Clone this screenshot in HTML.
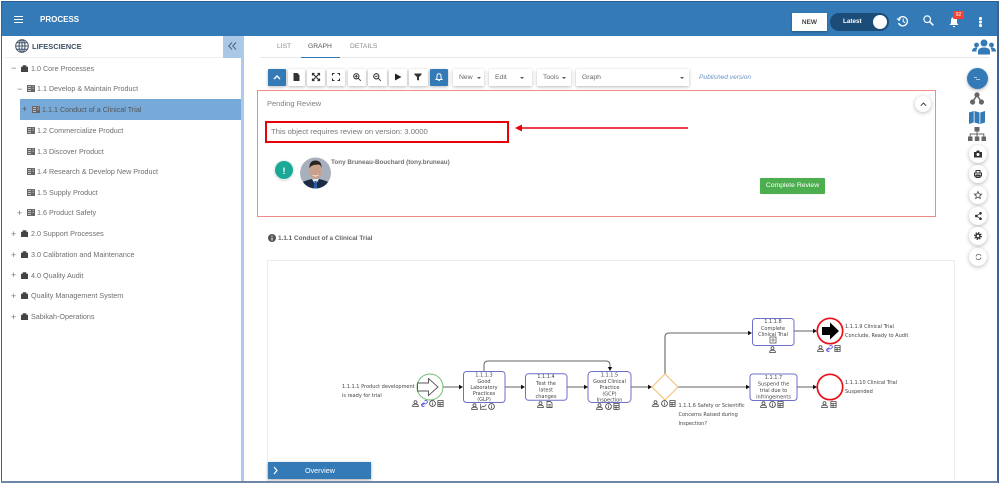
<!DOCTYPE html>
<html><head><meta charset="utf-8">
<style>
html,body{margin:0;padding:0;background:#fff}
#p{position:relative;width:1000px;height:484px;overflow:hidden;background:#fff;font-family:"Liberation Sans",sans-serif;color:#757575}
#p div,#p span.a{position:absolute;white-space:nowrap}
.t{font-size:7.2px;line-height:10px;color:#6f6f6f}
.ex{font-size:9px;line-height:10px;color:#777}
.b{background:#fff;box-shadow:0 1px 3px rgba(0,0,0,.28);border-radius:1px;height:17px;top:69px}
.bb{background:#337ab7}
.c{background:#fff;border-radius:50%;box-shadow:0 1px 4px rgba(0,0,0,.28);width:18px;height:18px;left:969px}
svg{position:absolute;overflow:visible}
</style></head><body><div id="p">
<!-- header -->
<div style="left:2px;top:2px;width:995px;height:34px;background:#337ab7"></div>
<div style="left:14px;top:16px;width:9px;height:1px;background:#fff;box-shadow:0 3px 0 #fff,0 6px 0 #fff"></div>
<div style="left:40px;top:15px;font-size:8px;line-height:10px;font-weight:bold;color:#fff">PROCESS</div>
<div style="left:792px;top:13px;width:35px;height:18px;background:#fff;box-shadow:0 1px 2px rgba(0,0,0,.3)"></div>
<div style="left:792px;top:18px;width:35px;text-align:center;font-size:6.5px;line-height:10px;font-weight:bold;color:#444">NEW</div>
<div style="left:830px;top:13px;width:59px;height:17.5px;background:#1c4c78;border-radius:9px"></div>
<div style="left:843px;top:17px;font-size:6.3px;line-height:10px;font-weight:bold;color:#fff">Latest</div>
<div style="left:873px;top:14.5px;width:14px;height:14px;background:#fff;border-radius:50%"></div>
<svg style="left:897px;top:15px" width="12" height="12" viewBox="0 0 12 12" fill="none" stroke="#fff" stroke-width="1.3"><path d="M1.5 4.5A4.6 4.6 0 1 1 1.5 8"/><path d="M0 3.5l2 2 1.5-2" stroke-width="1"/><path d="M6.2 3.5v3l2 1.2" stroke-width="1"/></svg>
<svg style="left:923px;top:15px" width="11" height="11" viewBox="0 0 11 11" fill="none" stroke="#fff" stroke-width="1.2"><circle cx="4.2" cy="4.2" r="3.3"/><path d="M6.8 6.8L10.3 10.3" stroke-width="1.5"/></svg>
<svg style="left:949px;top:17px" width="10" height="11" viewBox="0 0 10 11" fill="#fff"><path d="M5 0C3 0 2 1.5 2 3.5V6L.5 8h9L8 6V3.5C8 1.5 7 0 5 0zM3.8 9a1.2 1.2 0 0 0 2.4 0z"/></svg>
<div style="left:953px;top:11px;width:11px;height:8px;background:#f44336;border-radius:1px"></div>
<div style="left:953px;top:11px;width:11px;text-align:center;font-size:5px;line-height:8px;color:#fff">92</div>
<div style="left:979px;top:17px;width:2.5px;height:2.5px;background:#fff;border-radius:50%;box-shadow:0 3.5px 0 #fff,0 7px 0 #fff"></div>
<!-- sidebar -->
<div style="left:241px;top:36px;width:3px;height:445px;background:#a9cbec"></div>
<div style="left:223px;top:36px;width:18px;height:22px;background:#a9c8e6"></div>
<svg style="left:228px;top:42px" width="9" height="8" viewBox="0 0 9 8" fill="none" stroke="#4d6a86" stroke-width="1.1"><path d="M4 .5L.8 4 4 7.5M8 .5L4.8 4 8 7.5"/></svg>
<div style="left:4px;top:57px;width:219px;height:1px;background:#f0f0f0"></div>
<svg style="left:15px;top:39px" width="14" height="14" viewBox="0 0 14 14" fill="none" stroke="#3f5268" stroke-width="1"><circle cx="7" cy="7" r="6.3"/><ellipse cx="7" cy="7" rx="3" ry="6.3"/><path d="M7 .7v12.6M.7 7h12.6M1.6 3.8h10.8M1.6 10.2h10.8"/></svg>
<div style="left:32px;top:42px;font-size:7.5px;line-height:10px;font-weight:bold;color:#3d5166">LIFESCIENCE</div>
<div style="left:20px;top:99px;width:221px;height:21px;background:#77a9d9"></div>

<svg width="0" height="0" style="left:0;top:0"><defs>
<symbol id="br" viewBox="0 0 7 7"><path d="M0 2h7v5H0zM2 2V.5h3V2" fill="#444" stroke="#444" stroke-width=".6"/></symbol>
<symbol id="pr" viewBox="0 0 8 7"><path d="M0 0h8v7H0z" fill="#666"/><path d="M1 1.5h3M1 3.5h3M1 5.5h3M5.5 1.2h1.500M5.5 3.2h1.500" stroke="#ddd" stroke-width=".7"/></symbol>
<symbol id="u" viewBox="0 0 8 8"><g fill="none" stroke="#555" stroke-width="1"><circle cx="4" cy="2.5" r="1.7"/><path d="M.8 7.5V6.5C.8 5.2 2 4.8 4 4.8s3.2.4 3.2 1.700v1z"/></g></symbol>
<symbol id="i" viewBox="0 0 8 8"><circle cx="4" cy="4" r="3.3" fill="none" stroke="#444" stroke-width="1"/><path d="M4 2v1M4 3.5v2.500" stroke="#444" stroke-width=".9"/></symbol>
<symbol id="d" viewBox="0 0 8 8"><path d="M1 .6h6v6.800H1zM1 3h6M1 5h6M3.5 3v4.400" fill="none" stroke="#444" stroke-width=".9"/></symbol>
<symbol id="l" viewBox="0 0 8 8"><path d="M1 6.5L3.5 4M4 1.5l1-1c1-.6 2.8 1 2.3 2.200l-1.5 1.500c-.8.6-1.6.2-2-.4M4 6.5l-1 1C2 8 .2 6.4.7 5.200l1.500-1.500c.8-.6 1.600-.2 2 .4" fill="none" stroke="#5b5be0" stroke-width="1"/></symbol>
<symbol id="g" viewBox="0 0 9 8"><path d="M.5 .5v7h8M1.5 5.5l2-2 1.500 1 3-3" fill="none" stroke="#444" stroke-width=".9"/></symbol>
<symbol id="f" viewBox="0 0 7 8"><path d="M.6.5h3.800l2 2v5H.6zM2 4h3M2 5.8h3" fill="none" stroke="#444" stroke-width=".9"/></symbol>
</defs></svg>

<div class="ex" style="left:11px;top:63px">−</div><svg style="left:21px;top:64.5px" width="7" height="7"><use href="#br"/></svg><div class="t" style="left:31px;top:64px">1.0 Core Processes</div>
<div class="ex" style="left:17px;top:84px">−</div><svg style="left:27px;top:85px" width="8" height="7"><use href="#pr"/></svg><div class="t" style="left:37px;top:84px">1.1 Develop &amp; Maintain Product</div>
<div class="ex" style="left:22px;top:104px;color:#555">+</div><svg style="left:32px;top:106px" width="8" height="7"><use href="#pr"/></svg><div class="t" style="left:42px;top:105px;color:#555">1.1.1 Conduct of a Clinical Trial</div>
<svg style="left:27px;top:127px" width="8" height="7"><use href="#pr"/></svg><div class="t" style="left:37px;top:126px">1.2 Commercialize Product</div>
<svg style="left:27px;top:148px" width="8" height="7"><use href="#pr"/></svg><div class="t" style="left:37px;top:147px">1.3 Discover Product</div>
<svg style="left:27px;top:168px" width="8" height="7"><use href="#pr"/></svg><div class="t" style="left:37px;top:167px">1.4 Research &amp; Develop New Product</div>
<svg style="left:27px;top:189px" width="8" height="7"><use href="#pr"/></svg><div class="t" style="left:37px;top:188px">1.5 Supply Product</div>
<div class="ex" style="left:17px;top:208px">+</div><svg style="left:27px;top:209px" width="8" height="7"><use href="#pr"/></svg><div class="t" style="left:37px;top:208px">1.6 Product Safety</div>
<div class="ex" style="left:11px;top:229px">+</div><svg style="left:21px;top:230px" width="7" height="7"><use href="#br"/></svg><div class="t" style="left:31px;top:229px">2.0 Support Processes</div>
<div class="ex" style="left:11px;top:250px">+</div><svg style="left:21px;top:251px" width="7" height="7"><use href="#br"/></svg><div class="t" style="left:31px;top:250px">3.0 Calibration and Maintenance</div>
<div class="ex" style="left:11px;top:270px">+</div><svg style="left:21px;top:272px" width="7" height="7"><use href="#br"/></svg><div class="t" style="left:31px;top:271px">4.0 Quality Audit</div>
<div class="ex" style="left:11px;top:291px">+</div><svg style="left:21px;top:292px" width="7" height="7"><use href="#br"/></svg><div class="t" style="left:31px;top:291px">Quality Management System</div>
<div class="ex" style="left:11px;top:312px">+</div><svg style="left:21px;top:313px" width="7" height="7"><use href="#br"/></svg><div class="t" style="left:31px;top:312px">Sabikah-Operations</div>

<!-- tabs -->
<div style="left:260px;top:57px;width:730px;height:1px;background:#e8e8e8"></div>
<div style="left:277px;top:42px;font-size:6.7px;line-height:10px;color:#8a8a8a">LIST</div>
<div style="left:308px;top:42px;font-size:6.7px;line-height:10px;color:#555">GRAPH</div>
<div style="left:350px;top:42px;font-size:6.7px;line-height:10px;color:#8a8a8a">DETAILS</div>
<div style="left:301px;top:57px;width:39px;height:1px;background:#337ab7"></div>
<!-- toolbar -->
<div class="b bb" style="left:268px;width:18px"></div>
<svg style="left:273px;top:75px" width="8" height="5" fill="none" stroke="#fff" stroke-width="1.4"><path d="M1 4l3-3 3 3"/></svg>
<div class="b" style="left:288px;width:17px"></div>
<svg style="left:293px;top:73px" width="7" height="8" fill="#333"><path d="M.5 0h4l2 2.200V8H.5z"/></svg>
<div class="b" style="left:307px;width:18px"></div>
<svg style="left:312px;top:73px" width="8" height="8" fill="none" stroke="#333" stroke-width="1.2"><path d="M1 1l6 6M7 1L1 7M.5 2.5V.5h2M5.5.5h2v2M.5 5.5v2h2M5.5 7.5h2v-2"/></svg>
<div class="b" style="left:327px;width:18px"></div>
<svg style="left:332px;top:73px" width="8" height="8" fill="none" stroke="#333" stroke-width="1.1"><path d="M.5 2.5V.5h2M5.5.5h2v2M.5 5.5v2h2M5.5 7.5h2v-2"/></svg>
<div class="b" style="left:348px;width:18px"></div>
<svg style="left:353px;top:73px" width="8" height="8" fill="none" stroke="#333" stroke-width="1.1"><circle cx="3.3" cy="3.3" r="2.6"/><path d="M5.3 5.3L7.8 7.800M2 3.3h2.600M3.3 2v2.600" stroke-width="1"/></svg>
<div class="b" style="left:368px;width:19px"></div>
<svg style="left:373px;top:73px" width="8" height="8" fill="none" stroke="#333" stroke-width="1.1"><circle cx="3.3" cy="3.3" r="2.6"/><path d="M5.3 5.3L7.8 7.800M2 3.3h2.600" stroke-width="1"/></svg>
<div class="b" style="left:389px;width:18px"></div>
<svg style="left:394px;top:73px" width="8" height="8" fill="#222"><path d="M1 .5l6.500 3.500L1 7.500z"/></svg>
<div class="b" style="left:409px;width:19px"></div>
<svg style="left:414px;top:73px" width="8" height="8" fill="#333"><path d="M.5.5h7v1.200L5 4v3.500L3 7V4L.5 1.700z"/></svg>
<div class="b bb" style="left:430px;width:18px"></div>
<svg style="left:435px;top:73px" width="8" height="9" fill="none" stroke="#fff" stroke-width="1"><path d="M4 .8C2.5.8 2 2 2 3.200V5L1 6.500h6L6 5V3.200C6 2 5.5.8 4 .8zM3.2 7.500h1.600"/></svg>
<div class="b" style="left:453px;width:31px"></div>
<div style="left:459px;top:73px;font-size:6.8px;line-height:10px;color:#666">New</div>
<div style="left:477px;top:77px;width:0;height:0;border:2px solid transparent;border-top-color:#555;border-bottom:0"></div>
<div class="b" style="left:489px;width:43px"></div>
<div style="left:495px;top:73px;font-size:6.8px;line-height:10px;color:#666">Edit</div>
<div style="left:520px;top:77px;width:0;height:0;border:2px solid transparent;border-top-color:#555;border-bottom:0"></div>
<div class="b" style="left:537px;width:34px"></div>
<div style="left:543px;top:73px;font-size:6.8px;line-height:10px;color:#666">Tools</div>
<div style="left:562px;top:77px;width:0;height:0;border:2px solid transparent;border-top-color:#555;border-bottom:0"></div>
<div class="b" style="left:576px;width:113px"></div>
<div style="left:582px;top:73px;font-size:6.8px;line-height:10px;color:#666">Graph</div>
<div style="left:680px;top:77px;width:0;height:0;border:2px solid transparent;border-top-color:#555;border-bottom:0"></div>
<div style="left:699px;top:73px;font-size:6.6px;line-height:10px;font-style:italic;color:#6b93c4">Published version</div>
<!-- pending -->
<div style="left:257px;top:90px;width:679px;height:127px;box-sizing:border-box;border:1px solid #f28a8a"></div>
<div style="left:267px;top:99px;font-size:7.5px;line-height:10px;color:#808080">Pending Review</div>
<div style="left:265px;top:121px;width:244px;height:22px;box-sizing:border-box;border:2px solid #e8000b"></div>
<div style="left:271px;top:127px;font-size:7.7px;line-height:10px;color:#777">This object requires review on version: 3.0000</div>
<svg style="left:514px;top:124px" width="176" height="8"><path d="M6 4h168" stroke="#e8000b" stroke-width="1.5"/><path d="M1 4l7-3.500v7z" fill="#e8000b"/></svg>
<div class="c" style="left:915px;top:96px;width:16px;height:16px"></div>
<svg style="left:920px;top:102px" width="7" height="5" fill="none" stroke="#444" stroke-width="1"><path d="M.8 3.8L3.5 1l2.700 2.800"/></svg>
<div style="left:275px;top:161px;width:18px;height:18px;background:#1aa997;border-radius:50%;box-shadow:0 0 0 1px #eee,0 1px 3px rgba(0,0,0,.25)"></div>
<div style="left:275px;top:166px;width:18px;text-align:center;color:#fff;font-size:9px;line-height:10px;font-weight:bold">!</div>
<svg style="left:300px;top:157px" width="31" height="32" viewBox="0 0 31 32"><defs><clipPath id="cp"><circle cx="15.5" cy="16" r="15.5"/></clipPath></defs><g clip-path="url(#cp)"><rect width="31" height="32" fill="#a9b0bd"/><path d="M0 32V27C3 24 8 23 12 22h7c4 1 9 2 12 5v5z" fill="#1d2c45"/><path d="M12 22l3.500 6 3.500-6z" fill="#dfe6ee"/><path d="M14.5 24h2l1 8h-4z" fill="#2a5ca8"/><ellipse cx="15.5" cy="14" rx="6" ry="8" fill="#c9a089"/><path d="M9.5 11.500C9 5.500 12 3.500 15.500 3.500S22 5.500 21.500 11.500C21 8.500 20 7.500 18 7.500 15 8 11 7.500 9.500 11.500z" fill="#2a2320"/><path d="M12 17.500c2 1.500 5 1.500 7 0-1 2.500-6 2.500-7 0z" fill="#fff"/></g></svg>
<div style="left:331px;top:158px;font-size:6.3px;line-height:10px;font-weight:bold;color:#707070">Tony Bruneau-Bouchard (tony.bruneau)</div>
<div style="left:760px;top:178px;width:65px;height:16px;background:#4cae4f;border-radius:1px;box-shadow:0 0 1px rgba(0,0,0,.2)"></div>
<div style="left:760px;top:181px;width:65px;text-align:center;font-size:6.8px;line-height:10px;color:#fff">Complete Review</div>
<!-- title -->
<svg style="left:268px;top:234px" width="8" height="8" viewBox="0 0 8 8"><circle cx="4" cy="4" r="4" fill="#555"/><path d="M4 1.500v1M4 3.400v3.100" stroke="#fff" stroke-width="1"/></svg>
<div style="left:278px;top:234px;font-size:6.4px;line-height:10px;font-weight:bold;color:#666">1.1.1 Conduct of a Clinical Trial</div>
<!-- frame -->
<div style="left:267px;top:260px;width:688px;height:222px;box-sizing:border-box;border:1px solid #ececec;border-bottom:none"></div>
<!-- diagram -->
<svg style="left:0;top:0" width="1000" height="484" viewBox="0 0 1000 484">
<g fill="none" stroke="#808080" stroke-width="1.3">
<path d="M443 387h18M505 387h18M567 387h19M631 387h19M678 387h69M797 387h18M794 331h21"/>
<path d="M484 371v-6q0-4 4-4h118q4 0 4 4v4" stroke="#666" stroke-width="1"/>
<path d="M665 374v-37q0-4 4-4h81" stroke="#666" stroke-width="1.1"/>
</g>
<g fill="#111"><path d="M463 387l-4-2.200v4.400zM525 387l-4-2.200v4.400zM588 387l-4-2.200v4.400zM652 387l-4-2.200v4.400zM750 387l-4-2.200v4.400zM817 387l-4-2.200v4.400zM817 331l-4-2.200v4.400zM752 333l-4-2.200v4.400zM610 371l-2.200-4h4.400z"/></g>
<circle cx="430" cy="387" r="13" fill="#fff" stroke="#6dbb70" stroke-width="1"/>
<path d="M417.5 383h11v-4.500l9.500 8.500-9.500 8.500v-4.500h-11z" fill="#fff" stroke="#555" stroke-width=".9"/>
<g fill="#fff" stroke="#6f6fc9" stroke-width="1"><rect x="463.5" y="371.5" width="41.5" height="31" rx="3"/><rect x="525.5" y="373.8" width="41.5" height="26.5" rx="3"/><rect x="588" y="371.5" width="43" height="31" rx="4"/><rect x="752.5" y="318.5" width="41.5" height="27" rx="3"/><rect x="750" y="374" width="47" height="26.5" rx="3"/></g>
<path d="M665 374l13 13-13 13-13-13z" fill="#fff" stroke="#f3bd74" stroke-width="1"/>
<circle cx="830" cy="331" r="12.7" fill="#fff" stroke="#ea0f17" stroke-width="1.7"/>
<path d="M822 327h8v-4.500l9 8.500-9 8.500v-4.500h-8z" fill="#000"/>
<circle cx="830" cy="387" r="12.7" fill="#fff" stroke="#ea0f17" stroke-width="1.7"/>
<rect x="770" y="337" width="6" height="6" fill="none" stroke="#444" stroke-width=".7"/><path d="M773 338v4M771 340h4" stroke="#444" stroke-width=".6"/>
<g font-family="'DejaVu Sans',sans-serif" font-size="5px" fill="#444" text-anchor="middle">
<text x="484" y="376.5">1.1.1.3</text><text x="484" y="383">Good</text><text x="484" y="389">Laboratory</text><text x="484" y="395">Practices</text><text x="484" y="401">(GLP)</text>
<text x="546" y="378">1.1.1.4</text><text x="546" y="385">Test the</text><text x="546" y="391.5">latest</text><text x="546" y="398">changes</text>
<text x="609.5" y="376.5">1.1.1.5</text><text x="609.5" y="383">Good Clinical</text><text x="609.5" y="389">Practice</text><text x="609.5" y="395.5">(GCP)</text><text x="609.5" y="401.5">Inspection</text>
<text x="773" y="323">1.1.1.8</text><text x="773" y="330">Complete</text><text x="773" y="336">Clinical Trial</text>
<text x="773.5" y="379">1.1.1.7</text><text x="773.5" y="385.5">Suspend the</text><text x="773.5" y="392">trial due to</text><text x="773.5" y="398.5">infringements</text>
</g>
<g font-family="'DejaVu Sans',sans-serif" font-size="5px" fill="#444">
<text x="342" y="388">1.1.1.1 Product development</text><text x="342" y="397">is ready for trial</text>
<text x="678.5" y="407">1.1.1.6 Safety or Scientific</text><text x="678.5" y="416">Concerns Raised during</text><text x="678.5" y="425">Inspection?</text>
<text x="845" y="328">1.1.1.9 Clinical Trial</text><text x="845" y="337">Conclude, Ready to Audit</text>
<text x="845" y="384">1.1.1.10 Clinical Trial</text><text x="845" y="393">Suspended</text>
</g>
<use href="#u" x="412" y="400" width="7" height="7"/><use href="#l" x="421" y="400" width="7" height="7"/><use href="#i" x="429" y="400" width="7" height="7"/><use href="#d" x="437" y="400" width="7" height="7"/>
<use href="#u" x="471" y="403" width="7" height="7"/><use href="#g" x="480" y="403" width="7" height="7"/><use href="#i" x="488" y="403" width="7" height="7"/>
<use href="#u" x="537" y="401" width="7" height="7"/><use href="#f" x="546" y="401" width="7" height="7"/>
<use href="#u" x="596" y="403" width="7" height="7"/><use href="#i" x="605" y="403" width="7" height="7"/><use href="#d" x="613" y="403" width="7" height="7"/>
<use href="#u" x="652" y="400" width="7" height="7"/><use href="#i" x="661" y="400" width="7" height="7"/><use href="#d" x="669" y="400" width="7" height="7"/>
<use href="#u" x="769" y="346" width="7" height="7"/>
<use href="#u" x="817" y="345" width="7" height="7"/><use href="#l" x="826" y="345" width="7" height="7"/><use href="#d" x="834" y="345" width="7" height="7"/>
<use href="#u" x="760" y="401" width="7" height="7"/><use href="#i" x="769" y="401" width="7" height="7"/><use href="#d" x="777" y="401" width="7" height="7"/>
<use href="#u" x="821" y="401" width="7" height="7"/><use href="#d" x="830" y="401" width="7" height="7"/>
</svg>
<!-- overview -->
<div style="left:268px;top:462px;width:103px;height:17px;background:#337ab7;box-shadow:0 1px 3px rgba(0,0,0,.35)"></div>
<svg style="left:273px;top:466px" width="6" height="9" fill="none" stroke="#fff" stroke-width="1.2"><path d="M1 1l3 3.500L1 8"/></svg>
<div style="left:305px;top:466px;font-size:7.2px;line-height:10px;color:#fff">Overview</div>
<!-- right rail -->
<svg style="left:972px;top:39px" width="24" height="16" viewBox="0 0 24 16" fill="#337ab7"><circle cx="12" cy="4" r="3.5"/><circle cx="4.5" cy="6" r="2.4"/><circle cx="19.5" cy="6" r="2.4"/><path d="M6 15.500v-3C6 9.500 9 8.500 12 8.500s6 1 6 4v3zM0 12.500c0-3 2-4 4.500-4l1 .5C4.500 10 4.500 11 4.500 12.500zM24 12.500c0-3-2-4-4.500-4l-1 .5c1 1 1 2 1 3.500z"/></svg>
<div style="left:967px;top:68px;width:21px;height:21px;background:#337ab7;border-radius:50%;box-shadow:0 1px 3px rgba(0,0,0,.3)"></div>
<svg style="left:974px;top:76px" width="7" height="5" stroke="#d5e4f2" stroke-width=".8" fill="none"><path d="M0 1.500h3M2 3.500h4"/></svg>
<svg style="left:970px;top:92px" width="14" height="13" viewBox="0 0 14 13" fill="#666"><circle cx="7" cy="2.8" r="2.6"/><circle cx="2.6" cy="10" r="2.6"/><circle cx="11.4" cy="10" r="2.6"/><path d="M7 3L2.600 10M7 3l4.400 7" stroke="#666" stroke-width="1.5"/></svg>
<svg style="left:969px;top:111px" width="16" height="13" viewBox="0 0 16 13" fill="#337ab7"><path d="M0 1.500L4.700 0v11.500L0 13zM5.500 0l5 1.500V13l-5-1.500zM11.300 1.500L16 0v11.500L11.300 13z"/></svg>
<svg style="left:968px;top:127px" width="18" height="14" viewBox="0 0 18 14" fill="#666"><rect x="6.5" y="0" width="5" height="4.5"/><rect x="0" y="9.5" width="4.5" height="4.5"/><rect x="6.8" y="9.5" width="4.5" height="4.5"/><rect x="13.5" y="9.5" width="4.5" height="4.5"/><path d="M9 4.500v5M2.200 9.500V7h13.600v2.500" fill="none" stroke="#666"/></svg>
<div class="c" style="top:145px"></div>
<svg style="left:974px;top:150px" width="8" height="8" fill="#333"><path d="M0 2h2l1-1.500h2L6 2h2v5.500H0z"/><circle cx="4" cy="4.500" r="1.500" fill="#fff"/></svg>
<div class="c" style="top:165px"></div>
<svg style="left:974px;top:170px" width="8" height="8" fill="none" stroke="#333" stroke-width="1"><path d="M2 2.500V.5h4v2M.5 6V3h7v3zM2 5h4v2.500H2z"/></svg>
<div class="c" style="top:186px"></div>
<svg style="left:974px;top:190.5px" width="8" height="8" fill="none" stroke="#444" stroke-width=".8"><path d="M4 .5l1.100 2.400 2.500.3-1.900 1.700.6 2.600L4 6.200 1.700 7.500l.6-2.600L.4 3.200l2.500-.3z"/></svg>
<div class="c" style="top:207px"></div>
<svg style="left:974.5px;top:212px" width="7" height="8" fill="#333" stroke="#333" stroke-width=".7"><circle cx="5.5" cy="1.300" r="1"/><circle cx="1.300" cy="4" r="1"/><circle cx="5.500" cy="6.700" r="1"/><path d="M5.500 1.300L1.300 4l4.200 2.700" fill="none"/></svg>
<div class="c" style="top:227px"></div>
<svg style="left:974px;top:232px" width="8" height="8" viewBox="0 0 8 8" fill="none" stroke="#333"><circle cx="4" cy="4" r="2" stroke-width="1.500"/><circle cx="4" cy="4" r="3.300" stroke-width="1.300" stroke-dasharray="1.300 1.290"/></svg>
<div class="c" style="top:248px"></div>
<svg style="left:974.5px;top:253px" width="7" height="8" fill="none" stroke="#666" stroke-width=".8"><path d="M1 3.500A2.700 2.700 0 0 1 5.500 2L6 3M6 4.500A2.700 2.700 0 0 1 1.500 6L1 5"/></svg>
<!-- outer border -->
<div style="left:1px;top:1px;width:998px;height:1px;background:#2b5f8f"></div>
<div style="left:1px;top:1px;width:1.3px;height:482px;background:#3f638e"></div>
<div style="left:997px;top:1px;width:1.5px;height:482px;background:#3f638e"></div>
<div style="left:1px;top:481px;width:997px;height:2px;background:#6f87a6"></div>
</div></body></html>
